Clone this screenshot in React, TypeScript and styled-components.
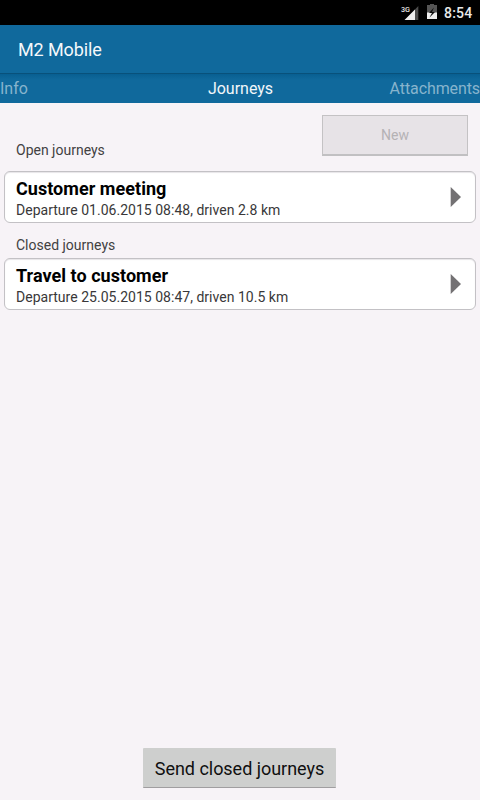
import React from "react";
import styled, { createGlobalStyle } from "styled-components";

const GlobalStyle = createGlobalStyle`
  * { box-sizing: border-box; }
  body { margin: 0; font-family: Roboto, sans-serif; background: #f7f3f7; }
`;

const Screen = styled.div`
  display: flex;
  flex-direction: column;
  width: 480px;
  height: 800px;
  overflow: hidden;
  background: #f7f3f7;
`;

const StatusBar = styled.header`
  display: flex;
  justify-content: flex-end;
  height: 25px;
  flex: none;
  padding-right: 7px;
  background: #000;
`;

const StatusIcons = styled.svg`
  display: block;
  width: 44px;
  height: 25px;
`;

const Clock = styled.time`
  width: 29px;
  color: #e9e9e9;
  font-size: 14px;
  font-weight: 500;
  letter-spacing: 0.2px;
  line-height: 26px;
  white-space: nowrap;
`;

const TitleBar = styled.div`
  height: 48px;
  flex: none;
  padding-left: 18px;
  background: #10699c;
  color: #f4f8fb;
  font-size: 18px;
  letter-spacing: -0.12px;
  line-height: 50px;
`;

const Tabs = styled.nav`
  display: grid;
  grid-template-columns: 1fr auto 1fr;
  height: 30px;
  flex: none;
  background: linear-gradient(#08517b 0 1px, #085f91 1px, #10699c 7px);
  font-size: 16px;
  line-height: 31px;
`;

const Tab = styled.span<{ $active?: boolean; $end?: boolean }>`
  padding-left: ${(p) => (p.$active ? "1px" : "0")};
  color: ${(p) => (p.$active ? "#f2f7fa" : "#87b4cd")};
  text-align: ${(p) => (p.$end ? "right" : "left")};
  letter-spacing: ${(p) => (p.$end ? "-0.1px" : "0")};
`;

const Content = styled.main`
  display: flex;
  flex: 1;
  flex-direction: column;
  padding: 12px 4px;
`;

const OpenHeader = styled.div`
  display: flex;
  justify-content: space-between;
  height: 56px;
  padding-right: 8px;
`;

const SectionLabel = styled.h2<{ $top: number }>`
  margin: 0;
  padding: ${(p) => p.$top}px 0 0 12px;
  color: #424142;
  font-size: 14px;
  font-weight: 400;
  line-height: 16px;
`;

const NewButton = styled.button`
  width: 146px;
  height: 41px;
  padding: 0;
  border: 1px solid #c4c2c4;
  border-bottom: 2px solid #c1c0c2;
  background: #e7e3e7;
  color: #b5b2b5;
  font: 14px Roboto, sans-serif;
`;

const JourneyCard = styled.article`
  display: flex;
  justify-content: space-between;
  align-items: center;
  height: 52px;
  padding: 0 13px 0 11px;
  border: 1px solid #c3c1c5;
  border-radius: 6px;
  background: #fff;
  box-shadow: inset 0 1px 1px #e7e5e8;
`;

const JourneyText = styled.div`
  padding-top: 4px;
`;

const JourneyTitle = styled.h3`
  margin: 0;
  color: #000;
  font-size: 18px;
  font-weight: 700;
  letter-spacing: 0.04px;
  line-height: 22px;
`;

const JourneyDetail = styled.p`
  margin: 0;
  color: #393839;
  font-size: 14px;
  letter-spacing: 0.02px;
  line-height: 20px;
`;

const Arrow = styled.svg`
  display: block;
  width: 12px;
  height: 20px;
`;

const ClosedHeader = styled.div`
  height: 35px;
`;

const Footer = styled.footer`
  display: flex;
  justify-content: center;
  margin-top: auto;
  padding-right: 1px;
`;

const SendButton = styled.button`
  width: 193px;
  height: 40px;
  padding: 2px 0 0;
  border: 0;
  border-bottom: 1px solid #a09ea0;
  border-radius: 1px;
  background: #cecfce;
  color: #101010;
  font: 18px Roboto, sans-serif;
  letter-spacing: -0.03px;
  white-space: nowrap;
`;

function Journey({ title, detail }: { title: string; detail: string }) {
  return (
    <JourneyCard>
      <JourneyText>
        <JourneyTitle>{title}</JourneyTitle>
        <JourneyDetail>{detail}</JourneyDetail>
      </JourneyText>
      <Arrow viewBox="0 0 12 20">
        <path d="M.7 0 11 10 .7 20Z" fill="#737173" />
      </Arrow>
    </JourneyCard>
  );
}

export default function App() {
  return (
    <Screen>
      <GlobalStyle />
      <StatusBar>
        <StatusIcons viewBox="0 0 44 25">
          <text x="1" y="12" fill="#e9e9e9" fontFamily="Roboto" fontSize="8" fontWeight="500" textLength="9" lengthAdjust="spacingAndGlyphs">3G</text>
          <path d="M18.3 6v14H5Z" fill="#4d4d4d" />
          <path d="M15 9.5V20H4.5Z" fill="#eee" />
          <path d="M27 5h3V4h4v1h3v8H27Z" fill="#555" />
          <path d="M27 12.5h10V19H27Z" fill="#eee" />
          <path d="M34 7.5 29 13h3l-2.5 4.5L35 12h-3Z" fill="#0b0b0b" />
        </StatusIcons>
        <Clock>8:54</Clock>
      </StatusBar>
      <TitleBar>M2 Mobile</TitleBar>
      <Tabs>
        <Tab>Info</Tab>
        <Tab $active>Journeys</Tab>
        <Tab $end>Attachments</Tab>
      </Tabs>
      <Content>
        <OpenHeader>
          <SectionLabel $top={27}>Open journeys</SectionLabel>
          <NewButton disabled>New</NewButton>
        </OpenHeader>
        <Journey title="Customer meeting" detail="Departure 01.06.2015 08:48, driven 2.8 km" />
        <ClosedHeader>
          <SectionLabel $top={14}>Closed journeys</SectionLabel>
        </ClosedHeader>
        <Journey title="Travel to customer" detail="Departure 25.05.2015 08:47, driven 10.5 km" />
        <Footer>
          <SendButton>Send closed journeys</SendButton>
        </Footer>
      </Content>
    </Screen>
  );
}
